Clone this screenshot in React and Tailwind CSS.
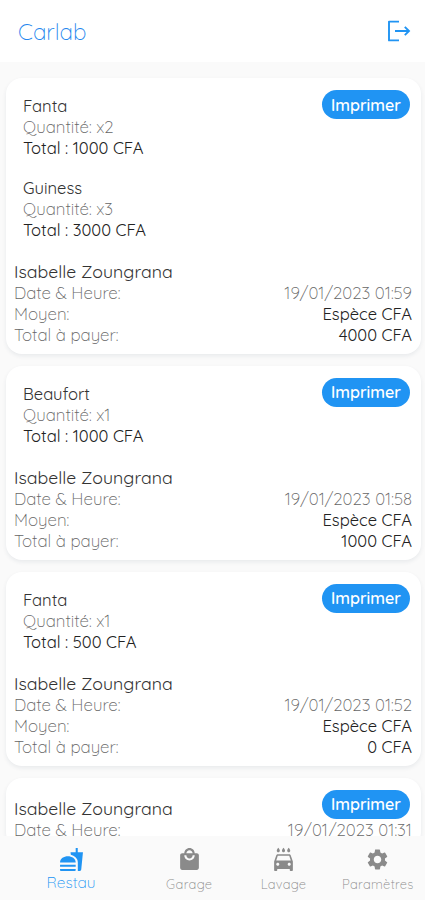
import React, { useState } from "react";
import { MdFastfood, MdLocalMall, MdLocalCarWash, MdSettings } from "react-icons/md";

const orders = [
  {
    id: 1,
    customer: "Isabelle Zoungrana",
    date: "19/01/2023 01:59",
    payment: "Espèce CFA",
    total: "4000 CFA",
    items: [
      { name: "Fanta", quantity: 2, total: 1000 },
      { name: "Guiness", quantity: 3, total: 3000 },
    ],
  },
  {
    id: 2,
    customer: "Isabelle Zoungrana",
    date: "19/01/2023 01:58",
    payment: "Espèce CFA",
    total: "1000 CFA",
    items: [{ name: "Beaufort", quantity: 1, total: 1000 }],
  },
  {
    id: 3,
    customer: "Isabelle Zoungrana",
    date: "19/01/2023 01:52",
    payment: "Espèce CFA",
    total: "0 CFA",
    items: [{ name: "Fanta", quantity: 1, total: 500 }],
  },
  {
    id: 4,
    customer: "Isabelle Zoungrana",
    date: "19/01/2023 01:31",
    items: [],
  },
];

const tabs = [
  { label: "Restau", icon: MdFastfood },
  { label: "Garage", icon: MdLocalMall },
  { label: "Lavage", icon: MdLocalCarWash },
  { label: "Paramètres", icon: MdSettings },
];

function LogoutIcon() {
  return (
    <svg width="24" height="22" viewBox="0 0 24 22" fill="none" stroke="currentColor" strokeWidth="1.9">
      <path d="M12 1.6H2v18.8h10" strokeLinejoin="round" />
      <path d="M8 11H22M17.8 6.8l4.2 4.2-4.2 4.2" />
    </svg>
  );
}

function OrderCard({ order }) {
  return (
    <div className="relative shrink-0 rounded-[16px] bg-white pt-[17px] pb-[7.5px] pl-2 pr-[9px] shadow-[0_2px_4px_rgba(30,50,80,0.08)]">
      <button className="absolute top-[12px] right-[11px] flex h-[29px] w-[88px] items-center justify-center rounded-full bg-[#2094f3] text-[16px] font-semibold text-white">
        Imprimer
      </button>

      {order.items.map((item) => (
        <div key={item.name} className="h-[81.5px] pl-[9px] text-[16.6px] leading-[21px]">
          <p className="text-[#333]">{item.name}</p>
          <p className="text-[16.9px] font-light text-[#666]">Quantité: x{item.quantity}</p>
          <p className="text-[#222]">Total : {item.total} CFA</p>
        </div>
      ))}

      <h2 className="mt-[2px] text-[17.7px] leading-[22px] text-[#333]">{order.customer}</h2>
      <div className="pb-px text-[16.6px] leading-[21px]">
        <div className="flex justify-between text-[16.9px] font-light text-[#666]">
          <span>Date &amp; Heure:</span>
          <span>{order.date}</span>
        </div>
        {order.payment && (
          <div className="flex justify-between">
            <span className="text-[16.9px] font-light text-[#666]">Moyen:</span>
            <span className="text-[#222]">{order.payment}</span>
          </div>
        )}
        {order.total && (
          <div className="flex justify-between">
            <span className="text-[16.9px] font-light text-[#666]">Total à payer:</span>
            <span className="text-[#222]">{order.total}</span>
          </div>
        )}
      </div>
    </div>
  );
}

export default function App() {
  const [activeTab, setActiveTab] = useState("Restau");

  return (
    <div className="flex h-[900px] w-[425px] flex-col overflow-hidden bg-[#fafafa] font-['Quicksand','Lato',sans-serif]">
      <header className="flex h-[62px] shrink-0 items-center justify-between bg-white pr-[14px] pl-[18px]">
        <h1 className="pt-[2px] text-[22.5px] font-light text-[#2587ee]">Carlab</h1>
        <button className="text-[#2094f3]">
          <LogoutIcon />
        </button>
      </header>

      <main className="flex min-h-0 flex-1 flex-col gap-3 overflow-hidden pt-4 pr-1 pl-1.5">
        {orders.map((order) => (
          <OrderCard key={order.id} order={order} />
        ))}
      </main>

      <nav className="flex h-[64px] shrink-0 bg-[#fafafa]">
        {tabs.map(({ label, icon: Icon }) => {
          const active = activeTab === label;
          return (
            <button
              key={label}
              onClick={() => setActiveTab(label)}
              className={`flex flex-col items-center pt-[11px] ${
                active ? "w-[142px] text-[#2094f3]" : "flex-1 text-[#8a8a8a]"
              }`}
            >
              <Icon size={25} className="shrink-0" />
              <span
                className={
                  active
                    ? "pt-px text-[15.5px] leading-[19px] font-light"
                    : "pt-[3px] text-[13px] leading-[18px] font-light tracking-[0.3px]"
                }
              >
                {label}
              </span>
            </button>
          );
        })}
      </nav>
    </div>
  );
}
